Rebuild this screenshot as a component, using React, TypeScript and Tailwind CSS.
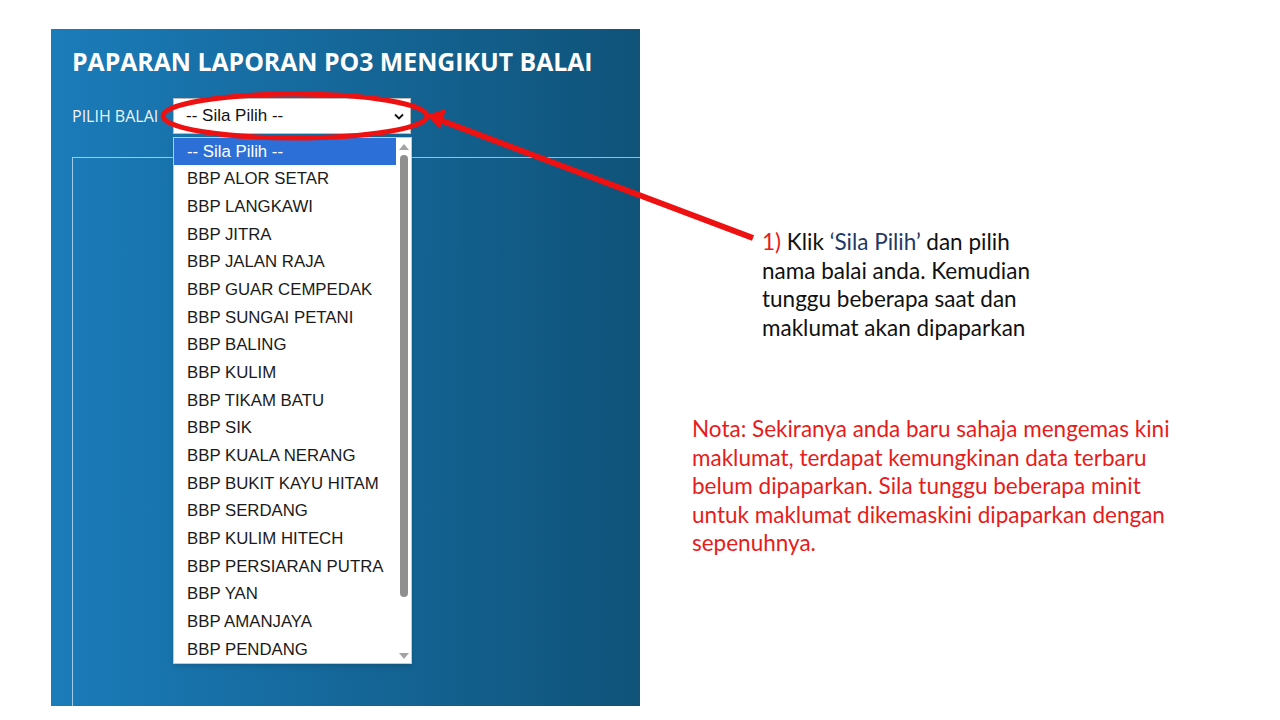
import React from 'react';

const balai = [
  'BBP ALOR SETAR',
  'BBP LANGKAWI',
  'BBP JITRA',
  'BBP JALAN RAJA',
  'BBP GUAR CEMPEDAK',
  'BBP SUNGAI PETANI',
  'BBP BALING',
  'BBP KULIM',
  'BBP TIKAM BATU',
  'BBP SIK',
  'BBP KUALA NERANG',
  'BBP BUKIT KAYU HITAM',
  'BBP SERDANG',
  'BBP KULIM HITECH',
  'BBP PERSIARAN PUTRA',
  'BBP YAN',
  'BBP AMANJAYA',
  'BBP PENDANG',
];

export default function App() {
  return (
    <div className="relative w-[1280px] h-[720px] bg-white overflow-hidden flex">
      {/* Screenshot panel */}
      <div className="ml-[51px] mt-[29px] w-[589px] h-[677px] bg-gradient-to-r from-[#1b7cba] to-[#0f5379] flex flex-col pl-[21px]">
        <h1 className="mt-[16px] text-white font-bold text-[24.8px] leading-[32px] font-['Open_Sans',sans-serif]">
          PAPARAN LAPORAN PO3 MENGIKUT BALAI
        </h1>
        <div className="mt-[21px] flex items-center">
          <span className="text-white/95 text-[16px] font-['Open_Sans',sans-serif] w-[101px]">PILIH BALAI</span>
          <div className="w-[238px] h-[36px] bg-white border border-[#bbb] flex items-center justify-between pl-[12px] pr-[6px]">
            <span className="text-[17px] text-[#111] font-['Liberation_Sans',Arial,sans-serif]">-- Sila Pilih --</span>
            <svg width="10" height="7" viewBox="0 0 10 7">
              <path d="M1 1.5 L5 5.5 L9 1.5" fill="none" stroke="#111" strokeWidth="1.8" />
            </svg>
          </div>
        </div>
        <div className="mt-[23px] flex-1 border-l border-t border-white/60" />
      </div>

      {/* Open dropdown list */}
      <div className="absolute left-[173px] top-[137px] w-[239px] h-[527px] bg-white border border-[#c8c8c8] shadow-md flex font-['Liberation_Sans',Arial,sans-serif] text-[16.8px] text-[#1a1a1a]">
        <div className="flex-1 flex flex-col">
          <div className="h-[27px] bg-[#2c6fd7] text-white pl-[13px] flex items-center">-- Sila Pilih --</div>
          {balai.map((b) => (
            <div key={b} className="h-[27.75px] pl-[13px] flex items-center">{b}</div>
          ))}
        </div>
        <div className="w-[15px] flex flex-col items-center pt-[6px] pb-[4px]">
          <svg width="10" height="6" viewBox="0 0 10 6"><path d="M0 6 L5 0 L10 6 Z" fill="#a3a3a3" /></svg>
          <div className="mt-[5px] w-[8px] h-[442px] rounded-full bg-[#8f8f8f]" />
          <div className="flex-1" />
          <svg width="10" height="6" viewBox="0 0 10 6"><path d="M0 0 L5 6 L10 0 Z" fill="#a3a3a3" /></svg>
        </div>
      </div>

      {/* Notes */}
      <div className="flex flex-col font-['Lato',sans-serif] text-[22.5px] leading-[28.5px]">
        <p className="ml-[122px] mt-[228px] w-[284px] text-[#111]">
          <span className="text-[#e81b1b]">1)</span> Klik <span className="text-[#1f3864]">‘Sila Pilih’</span> dan pilih nama balai anda. Kemudian tunggu beberapa saat dan maklumat akan dipaparkan
        </p>
        <p className="ml-[52px] mt-[73px] w-[494px] text-[#e81b1b]">
          Nota: Sekiranya anda baru sahaja mengemas kini maklumat, terdapat kemungkinan data terbaru belum dipaparkan. Sila tunggu beberapa minit untuk maklumat dikemaskini dipaparkan dengan sepenuhnya.
        </p>
      </div>

      {/* Red annotation */}
      <svg className="absolute inset-0 pointer-events-none" width="1280" height="720">
        <ellipse cx="295" cy="116" rx="132" ry="22" fill="none" stroke="#ee1111" strokeWidth="5" />
        <line x1="753" y1="238" x2="440" y2="120" stroke="#ee1111" strokeWidth="6" />
        <polygon points="427,115 446,109 440,129" fill="#ee1111" />
      </svg>
    </div>
  );
}
